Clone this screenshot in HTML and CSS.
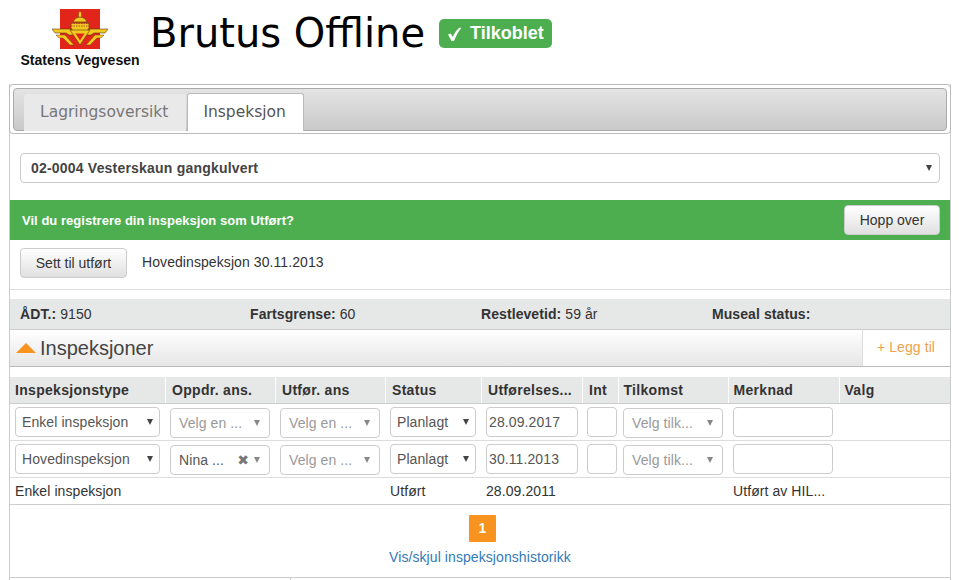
FILE: index.html
```html
<!DOCTYPE html>
<html lang="no">
<head>
    <meta charset="UTF-8">
    <meta name="viewport" content="width=device-width, initial-scale=1.0">
    <title>Brutus Offline</title>
    <link rel="stylesheet" href="styles.css">
</head>
<body>
    <header class="page-header">
        <div class="brand">
            <svg class="brand-logo" width="60" height="44" viewBox="0 0 60 44">
                <rect x="8" y="1" width="40" height="40" fill="#e1251b"/>
                <!-- crown -->
                <path d="M19 15h18v5l-2 3H21l-2-3z" fill="#f3c81f" stroke="#7a4a10" stroke-width=".8"/>
                <path d="M19 18h18M19 15.500h18" stroke="#a33" stroke-width=".8" stroke-dasharray="1.500 1"/>
                <path d="M21 14c1-3 4-5 7-5s6 2 7 5z" fill="#f3c81f" stroke="#7a4a10" stroke-width=".8"/>
                <path d="M28 3l1.500 2v4h-3V5z" fill="#f3c81f" stroke="#7a4a10" stroke-width=".5"/>
                <!-- wings -->
                <path d="M0 21h18l5 6h-6l-3-2H3z" fill="#f3c81f" stroke="#5a3a10" stroke-width=".6"/>
                <path d="M56 21H38l-5 6h6l3-2h11z" fill="#f3c81f" stroke="#5a3a10" stroke-width=".6"/>
                <path d="M4 27h9l9 10h-4l-7-7H7z" fill="#f3c81f" stroke="#5a3a10" stroke-width=".4"/>
                <path d="M52 27h-9l-9 10h4l7-7h4z" fill="#f3c81f" stroke="#5a3a10" stroke-width=".4"/>
                <!-- triangle -->
                <path d="M18 22h20l-10 15z" fill="#f3c81f" stroke="#5a3a10" stroke-width=".6"/>
                <path d="M23.500 25.500h9L28 32.500z" fill="#e1251b"/>
            </svg>
            <span class="brand-name">Statens Vegvesen</span>
        </div>
        <h1 class="page-title">Brutus Offline</h1>
        <span class="status-badge">
            <svg class="status-check" width="16" height="16" viewBox="0 0 16 16">
                <path d="M1 8.500l2.800-1 1.700 3.500C7.500 7 9.500 4 12.500 1.500l1.800.5C11 6 9 10 7 15H4.500z" fill="#fff"/>
            </svg>
            Tilkoblet
        </span>
    </header>

    <main class="panel">
        <div class="tabs">
            <div class="tabs-bar">
                <a class="tab">Lagringsoversikt</a>
                <a class="tab tab-active">Inspeksjon</a>
            </div>
        </div>

        <div class="object-row">
            <div class="picker picker-object">
                <span>02-0004 Vesterskaun gangkulvert</span>
                <i class="caret caret-dark"></i>
            </div>
        </div>

        <div class="notice">
            <strong>Vil du registrere din inspeksjon som Utført?</strong>
            <button class="btn btn-skip">Hopp over</button>
        </div>

        <div class="action-row">
            <button class="btn btn-done">Sett til utført</button>
            <span>Hovedinspeksjon 30.11.2013</span>
        </div>

        <div class="stats">
            <div><b>ÅDT.:</b> 9150</div>
            <div><b>Fartsgrense:</b> 60</div>
            <div><b>Restlevetid:</b> 59 år</div>
            <div><b>Museal status:</b></div>
        </div>

        <div class="section-head">
            <h2 class="section-title"><i class="arrow-up"></i>Inspeksjoner</h2>
            <a class="add-link">+ Legg til</a>
        </div>

        <table class="insp-table">
            <colgroup>
                <col class="c-type"><col class="c-ans"><col class="c-ans"><col class="c-status">
                <col class="c-date"><col class="c-int"><col class="c-ans"><col class="c-note"><col>
            </colgroup>
            <thead>
                <tr>
                    <th>Inspeksjonstype</th>
                    <th>Oppdr. ans.</th>
                    <th>Utfør. ans</th>
                    <th>Status</th>
                    <th>Utførelses...</th>
                    <th>Int</th>
                    <th>Tilkomst</th>
                    <th>Merknad</th>
                    <th>Valg</th>
                </tr>
            </thead>
            <tbody>
                <tr>
                    <td><div class="picker picker-solid"><span>Enkel inspeksjon</span><i class="caret caret-dark"></i></div></td>
                    <td><div class="picker picker-empty"><span>Velg en ...</span><i class="caret"></i></div></td>
                    <td><div class="picker picker-empty"><span>Velg en ...</span><i class="caret"></i></div></td>
                    <td><div class="picker picker-solid"><span>Planlagt</span><i class="caret caret-dark"></i></div></td>
                    <td><input class="field field-date" value="28.09.2017"></td>
                    <td><input class="field field-int"></td>
                    <td><div class="picker picker-empty"><span>Velg tilk...</span><i class="caret"></i></div></td>
                    <td><input class="field field-note"></td>
                    <td></td>
                </tr>
                <tr>
                    <td><div class="picker picker-solid"><span>Hovedinspeksjon</span><i class="caret caret-dark"></i></div></td>
                    <td><div class="picker picker-empty picker-filled"><span>Nina ...</span><em class="clear">✖</em><i class="caret"></i></div></td>
                    <td><div class="picker picker-empty"><span>Velg en ...</span><i class="caret"></i></div></td>
                    <td><div class="picker picker-solid"><span>Planlagt</span><i class="caret caret-dark"></i></div></td>
                    <td><input class="field field-date" value="30.11.2013"></td>
                    <td><input class="field field-int"></td>
                    <td><div class="picker picker-empty"><span>Velg tilk...</span><i class="caret"></i></div></td>
                    <td><input class="field field-note"></td>
                    <td></td>
                </tr>
                <tr class="row-plain">
                    <td>Enkel inspeksjon</td>
                    <td></td>
                    <td></td>
                    <td>Utført</td>
                    <td>28.09.2011</td>
                    <td></td>
                    <td></td>
                    <td>Utført av HIL...</td>
                    <td></td>
                </tr>
            </tbody>
        </table>

        <div class="pager">
            <span class="page-num">1</span>
            <a class="history-link">Vis/skjul inspeksjonshistorikk</a>
        </div>

        <div class="next-row">
            <div></div>
            <div></div>
        </div>
    </main>
</body>
</html>
```

FILE: styles.css
```css
* {
    box-sizing: border-box;
}

html, body {
    height: 580px;
}

body {
    margin: 0;
    font-family: "Liberation Sans", Arial, sans-serif;
    font-size: 14px;
    letter-spacing: .08px;
    color: #333;
    background: #fff;
}

/* header */
.page-header {
    display: flex;
    height: 84px;
    padding-left: 20px;
}

.brand {
    display: flex;
    flex-direction: column;
    align-items: center;
    width: 120px;
    padding-top: 8px;
}

.brand-logo {
    display: block;
    margin-left: 4px;
}

.brand-name {
    font-size: 14px;
    font-weight: bold;
    letter-spacing: 0;
    color: #111;
    white-space: nowrap;
}

.page-title {
    margin: 10px 0 0 10px;
    font-family: "DejaVu Sans", Verdana, sans-serif;
    font-size: 40px;
    font-weight: normal;
    line-height: 46px;
    letter-spacing: 0;
    color: #000;
}

.status-badge {
    display: flex;
    align-items: center;
    height: 29px;
    margin: 19px 0 0 14px;
    padding: 0 8px;
    border-radius: 5px;
    background: #4cae4f;
    color: #fff;
    font-size: 18px;
    font-weight: bold;
    letter-spacing: 0;
}

.status-check {
    margin-right: 7px;
}

/* main panel */
.panel {
    height: 496px;
    margin: 0 11px 0 9px;
    border-left: 1px solid #ccc;
    border-right: 1px solid #ccc;
}

.tabs {
    height: 50px;
    margin: 0 -1px;
    padding: 3px;
    border: 1px solid #bbb;
    border-radius: 4px;
}

.tabs-bar {
    display: flex;
    align-items: flex-end;
    gap: 1px;
    height: 43px;
    padding-left: 10px;
    border: 1px solid #aaa;
    border-radius: 4px;
    background: linear-gradient(#e4e4e4, #c9c9c9);
}

.tab {
    display: block;
    height: 37px;
    padding: 0 18px 0 16px;
    margin-bottom: -1px;
    background: #e9e9e9;
    border-radius: 3px 3px 0 0;
    font-family: "DejaVu Sans", Verdana, sans-serif;
    font-size: 15.500px;
    letter-spacing: 0;
    line-height: 37px;
    color: #777;
}

.tab-active {
    height: 38px;
    padding: 0 17px 0 15px;
    background: #fff;
    border: 1px solid #bbb;
    border-bottom: 0;
    color: #555;
}

.object-row {
    padding: 19px 10px 17px;
}

/* pickers */
.picker {
    display: flex;
    align-items: center;
    justify-content: space-between;
    height: 30px;
    padding: 0 6px;
    background: #fff;
    border: 1px solid #ccc;
    border-radius: 4px;
    white-space: nowrap;
}

.picker-object {
    padding: 0 7px 0 10px;
    font-weight: bold;
    letter-spacing: .2px;
    color: #444;
}

.picker-solid {
    color: #555;
}

.picker-empty {
    margin: 1px 0 -1px;
    padding: 0 9px 0 8px;
    color: #999;
}

.picker-filled span {
    color: #555;
    margin-right: auto;
}

.clear {
    margin-right: 5px;
    font-family: "DejaVu Sans", sans-serif;
    font-style: normal;
    font-size: 14px;
    line-height: 14px;
    color: #777;
}

.caret {
    width: 0;
    height: 0;
    border-left: 3.500px solid transparent;
    border-right: 3.500px solid transparent;
    border-top: 6px solid #888;
}

.caret-dark {
    border-top-color: #444;
}

.notice {
    display: flex;
    align-items: center;
    justify-content: space-between;
    height: 40px;
    padding: 0 10px 0 12px;
    background: #4cae4f;
    color: #fff;
    font-size: 13px;
    letter-spacing: .03px;
}

.btn {
    height: 30px;
    padding: 0 14px;
    border: 1px solid #ccc;
    border-radius: 4px;
    background: linear-gradient(#fff, #e0e0e0);
    font-family: inherit;
    font-size: 14px;
    color: #333;
}

.btn-skip {
    width: 96px;
    padding: 0;
}

.action-row {
    display: flex;
    align-items: flex-start;
    gap: 15px;
    height: 50px;
    padding: 8px 10px 0;
    border-bottom: 1px solid #ddd;
    line-height: 28px;
}

.btn-done {
    width: 107px;
    padding: 0;
}

.stats {
    display: grid;
    grid-template-columns: 230px repeat(3, 231px);
    height: 31px;
    margin-top: 9px;
    padding-left: 10px;
    background: #e6e7e7;
    border-bottom: 1px solid #ccc;
    line-height: 30px;
}

.section-head {
    display: flex;
    justify-content: space-between;
    height: 37px;
    background: linear-gradient(#fff, #e6e6e6);
    border-bottom: 1px solid #bbb;
}

.section-title {
    display: flex;
    align-items: center;
    margin: 0;
    padding-left: 6px;
    font-size: 20px;
    font-weight: normal;
    letter-spacing: 0;
    color: #444;
}

.arrow-up {
    width: 0;
    height: 0;
    margin-right: 4px;
    border-left: 10px solid transparent;
    border-right: 10px solid transparent;
    border-bottom: 10px solid #f7931e;
}

.add-link {
    width: 88px;
    padding-left: 14px;
    background: #fff;
    border-left: 1px solid #ddd;
    line-height: 35px;
    color: #f0a04b;
}

/* table */
.insp-table {
    width: 100%;
    margin-top: 10px;
    border-collapse: collapse;
    table-layout: fixed;
}

.c-type { width: 155px; }
.c-ans { width: 110px; }
.c-status { width: 96px; }
.c-date { width: 101px; }
.c-int { width: 36px; }
.c-note { width: 111px; }

.insp-table th {
    height: 26px;
    padding: 0 0 0 6.500px;
    background: #e6e7e7;
    border-left: 1px solid #fff;
    border-bottom: 1px solid #ccc;
    text-align: left;
    font-size: 14px;
    letter-spacing: .3px;
    white-space: nowrap;
}

.insp-table th:first-child {
    padding-left: 5px;
    border-left: 0;
}

.insp-table th:nth-child(n+7) {
    padding-left: 5px;
}

.insp-table td {
    height: 37px;
    padding: 0 5px;
    border-bottom: 1px solid #ddd;
    white-space: nowrap;
}

.insp-table .row-plain td {
    height: 27px;
    border-bottom-color: #ccc;
}

.field {
    display: block;
    width: 100%;
    height: 30px;
    padding: 0 2px;
    border: 1px solid #ccc;
    border-radius: 4px;
    font-family: inherit;
    font-size: 14px;
    letter-spacing: .1px;
    color: #555;
    background: #fff;
}

.field-date {
    width: 92px;
}

.field-int {
    width: 30px;
}

.field-note {
    width: 100px;
}

.pager {
    display: flex;
    flex-direction: column;
    align-items: center;
    height: 72px;
    padding-top: 10px;
}

.page-num {
    width: 27px;
    height: 27px;
    margin-left: 5px;
    background: #f7931e;
    border-radius: 1px;
    color: #fff;
    font-weight: bold;
    text-align: center;
    line-height: 27px;
}

.history-link {
    margin-top: 7px;
    color: #337ab7;
}

.next-row {
    display: grid;
    grid-template-columns: 281px 1fr;
    height: 3px;
    border-top: 1px solid #ccc;
}

.next-row div:first-child {
    border-right: 1px solid #ccc;
}
```
